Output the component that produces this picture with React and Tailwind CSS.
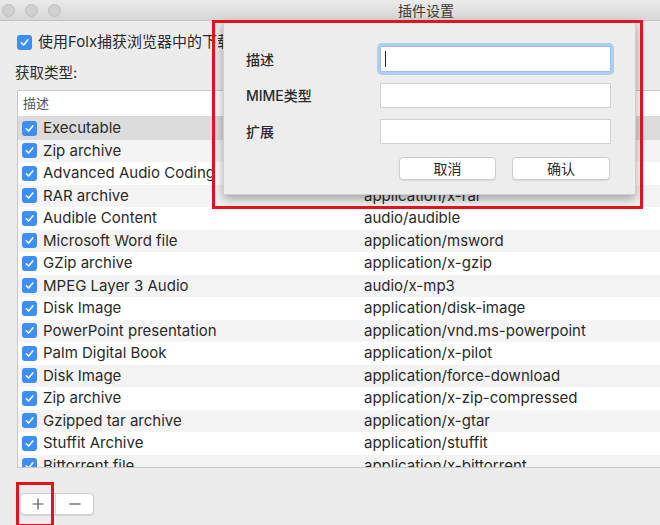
import React from "react";

const rows = [
  ["Executable", "application/octet-stream"],
  ["Zip archive", "application/zip"],
  ["Advanced Audio Coding", "audio/aac"],
  ["RAR archive", "application/x-rar"],
  ["Audible Content", "audio/audible"],
  ["Microsoft Word file", "application/msword"],
  ["GZip archive", "application/x-gzip"],
  ["MPEG Layer 3 Audio", "audio/x-mp3"],
  ["Disk Image", "application/disk-image"],
  ["PowerPoint presentation", "application/vnd.ms-powerpoint"],
  ["Palm Digital Book", "application/x-pilot"],
  ["Disk Image", "application/force-download"],
  ["Zip archive", "application/x-zip-compressed"],
  ["Gzipped tar archive", "application/x-gtar"],
  ["Stuffit Archive", "application/stuffit"],
  ["Bittorrent file", "application/x-bittorrent"],
];

function Check() {
  return (
    <span className="w-[15px] h-[15px] shrink-0 rounded-[3px] bg-[#3d8ef5] flex items-center justify-center">
      <svg viewBox="0 0 12 12" className="w-[11px] h-[11px]">
        <path d="M2.5 6.3 L5 8.8 L9.6 3.2" fill="none" stroke="white" strokeWidth="1.7" strokeLinecap="round" strokeLinejoin="round" />
      </svg>
    </span>
  );
}

export default function App() {
  const font = { fontFamily: 'Inter, "Noto Sans CJK SC", sans-serif' };
  return (
    <div className="relative w-[660px] h-[525px] overflow-hidden bg-[#ececec] text-[#2a2a2a]" style={font}>
      {/* title bar */}
      <div className="h-[21px] bg-gradient-to-b from-[#ebebeb] to-[#d6d6d6] border-b border-[#c4c4c4] flex items-center relative">
        <div className="flex gap-[10px] ml-[2px]">
          <span className="w-[13px] h-[13px] rounded-full bg-[#d0d0d0] border border-[#c0c0c0]" />
          <span className="w-[13px] h-[13px] rounded-full bg-[#d0d0d0] border border-[#c0c0c0]" />
          <span className="w-[13px] h-[13px] rounded-full bg-[#d0d0d0] border border-[#c0c0c0]" />
        </div>
        <div className="absolute left-[398px] top-0 h-full flex items-center text-[14px] text-[#3a3a3a]">插件设置</div>
      </div>

      {/* content */}
      <div className="pl-[17px]">
        <div className="flex items-center gap-[6px] mt-[13px] h-[16px]">
          <Check />
          <span className="text-[15px] whitespace-nowrap">使用Folx捕获浏览器中的下载</span>
        </div>
        <div className="mt-[14px] ml-[-2px] text-[14.5px] h-[18px] leading-[18px]">获取类型:</div>

        <div className="mt-[8px] w-[700px] h-[378px] bg-white border border-[#c8c8c8] overflow-hidden">
          <div className="h-[26px] border-b border-[#d8d8d8] flex items-center pl-[5px] text-[13px] text-[#555]">描述</div>
          <div>
            {rows.map(([name, mime], i) => (
              <div
                key={i}
                className={`h-[22.5px] flex items-center text-[15px] ${
                  i === 0 ? "bg-[#dcdcdc]" : i % 2 === 1 ? "bg-[#f4f4f4]" : "bg-white"
                }`}
              >
                <div className="w-[346px] flex items-center gap-[6px] pl-[4px] whitespace-nowrap">
                  <Check />
                  <span>{name}</span>
                </div>
                <span className="whitespace-nowrap">{mime}</span>
              </div>
            ))}
          </div>
        </div>

        {/* +/- */}
        <div className="mt-[25px] ml-[3px] flex w-[74px] h-[22px] bg-white border border-[#cfcfcf] rounded-[4px] shadow-[0_1px_1px_rgba(0,0,0,0.1)] text-[#555]">
          <div className="w-[35px] flex items-center justify-center border-r border-[#d6d6d6]">
            <svg viewBox="0 0 12 12" className="w-[12px] h-[12px]"><path d="M6 0.5V11.5M0.5 6H11.5" stroke="#555" strokeWidth="1.2" /></svg>
          </div>
          <div className="flex-1 flex items-center justify-center">
            <svg viewBox="0 0 12 12" className="w-[12px] h-[12px]"><path d="M0.5 6H11.5" stroke="#555" strokeWidth="1.2" /></svg>
          </div>
        </div>
      </div>

      {/* sheet dialog */}
      <div className="absolute left-[223px] top-[21px] w-[413px] h-[174px] bg-[#ededed] shadow-[0_4px_10px_rgba(0,0,0,0.35)] border border-[#d0d0d0]">
        <div className="grid grid-cols-[134px_231px] gap-y-[11px] pl-[22px] pt-[24px] items-center">
          <div className="text-[14px] font-medium">描述</div>
          <div className="h-[26px] bg-white border border-[#9cc0f0] rounded-[2px] ring-[3px] ring-[#9fc4f3]/80 flex items-center pl-[4px]">
            <span className="w-[1px] h-[16px] bg-[#222]" />
          </div>
          <div className="text-[14px] font-medium">MIME类型</div>
          <div className="h-[25px] bg-white border border-[#d2d2d2]" />
          <div className="text-[14px] font-medium">扩展</div>
          <div className="h-[25px] bg-white border border-[#d2d2d2]" />
        </div>
        <div className="flex justify-end gap-[16px] pr-[25px] mt-[13px]">
          <button className="w-[97px] h-[23px] bg-white border border-[#cdcdcd] rounded-[4px] shadow-[0_1px_1px_rgba(0,0,0,0.08)] text-[14px]">取消</button>
          <button className="w-[98px] h-[23px] bg-white border border-[#cdcdcd] rounded-[4px] shadow-[0_1px_1px_rgba(0,0,0,0.08)] text-[14px]">确认</button>
        </div>
      </div>

      {/* annotation boxes */}
      <div className="absolute left-[212px] top-[20px] w-[431px] h-[189px] border-[3px] border-[#e0141b]" />
      <div className="absolute left-[16px] top-[482px] w-[38px] h-[45px] border-[3px] border-[#e0141b]" />
    </div>
  );
}
